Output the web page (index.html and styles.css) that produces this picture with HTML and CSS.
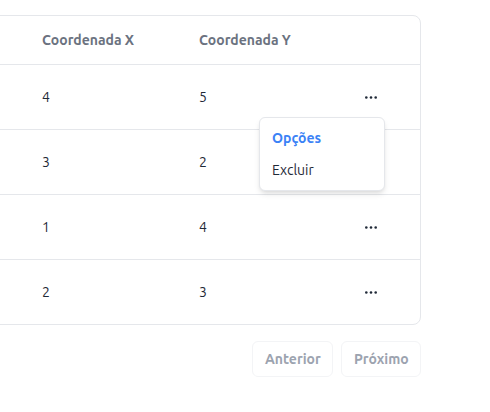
FILE: index.html
```html
<!DOCTYPE html>
<html lang="pt">
<head>
<meta charset="utf-8">
<link rel="stylesheet" href="styles.css">
</head>
<body>
<div class="page">
  <div class="card">
    <div class="row head">
      <div class="cell"></div>
      <div class="cell">Coordenada X</div>
      <div class="cell">Coordenada Y</div>
      <div class="cell act"></div>
    </div>
    <div class="row">
      <div class="cell"></div>
      <div class="cell">4</div>
      <div class="cell">5</div>
      <div class="cell act"><svg class="dots" width="12" height="3" viewBox="0 0 12 3"><circle cx="1.3" cy="1.5" r="1.3"/><circle cx="6" cy="1.5" r="1.3"/><circle cx="10.7" cy="1.5" r="1.3"/></svg></div>
    </div>
    <div class="row">
      <div class="cell"></div>
      <div class="cell">3</div>
      <div class="cell">2</div>
      <div class="cell act"></div>
    </div>
    <div class="row">
      <div class="cell"></div>
      <div class="cell">1</div>
      <div class="cell">4</div>
      <div class="cell act"><svg class="dots" width="12" height="3" viewBox="0 0 12 3"><circle cx="1.3" cy="1.5" r="1.3"/><circle cx="6" cy="1.5" r="1.3"/><circle cx="10.7" cy="1.5" r="1.3"/></svg></div>
    </div>
    <div class="row last">
      <div class="cell"></div>
      <div class="cell">2</div>
      <div class="cell">3</div>
      <div class="cell act"><svg class="dots" width="12" height="3" viewBox="0 0 12 3"><circle cx="1.3" cy="1.5" r="1.3"/><circle cx="6" cy="1.5" r="1.3"/><circle cx="10.7" cy="1.5" r="1.3"/></svg></div>
    </div>
    <div class="menu">
      <div class="menu-item title">Opções</div>
      <div class="menu-item">Excluir</div>
    </div>
  </div>
  <div class="pager">
    <button class="btn">Anterior</button>
    <button class="btn">Próximo</button>
  </div>
</div>
</body>
</html>
```

FILE: styles.css
```css
* { box-sizing: border-box; }
html, body { margin: 0; padding: 0; background: #fff; }
body {
  font-family: "Ubuntu", "Open Sans", "Noto Sans", sans-serif;
  font-size: 14px;
  color: #1f2937;
}
.page {
  padding-top: 15px;
  width: 441px;
  margin-left: -20px;
}
.card {
  position: relative;
  width: 441px;
  border: 1px solid #e5e7eb;
  border-radius: 8px;
  background: #fff;
}
.row {
  display: grid;
  grid-template-columns: 61px 157px 122px 99px;
  height: 65px;
  align-items: center;
  border-bottom: 1px solid #e5e7eb;
}
.row.head {
  height: 49px;
  font-weight: 600;
  color: #6b7280;
}
.row.last { border-bottom: none; height: 64px; }
.cell { white-space: nowrap; }
.cell.act { display: flex; justify-content: center; align-items: center; }
.dots { fill: #1f2937; display: block; }
.menu {
  position: absolute;
  left: 278px;
  top: 101px;
  width: 126px;
  padding: 4px 0;
  background: #fff;
  border: 1px solid #e5e7eb;
  border-radius: 6px;
  box-shadow: 0 4px 6px -1px rgba(0,0,0,0.1), 0 2px 4px -2px rgba(0,0,0,0.1);
}
.menu-item {
  height: 32px;
  line-height: 32px;
  padding: 0 12px;
  color: #1f2937;
}
.menu-item.title { color: #3b82f6; font-weight: 700; }
.pager {
  display: flex;
  justify-content: flex-end;
  gap: 8px;
  margin-top: 16px;
}
.btn {
  height: 36px;
  padding: 0 12px;
  font-family: inherit;
  font-size: 14px;
  font-weight: 600;
  color: #9ca3af;
  background: #fff;
  border: 1px solid #f3f4f6;
  border-radius: 6px;
}
.btn:first-child { width: 81px; }
.btn:last-child { width: 80px; }
```
